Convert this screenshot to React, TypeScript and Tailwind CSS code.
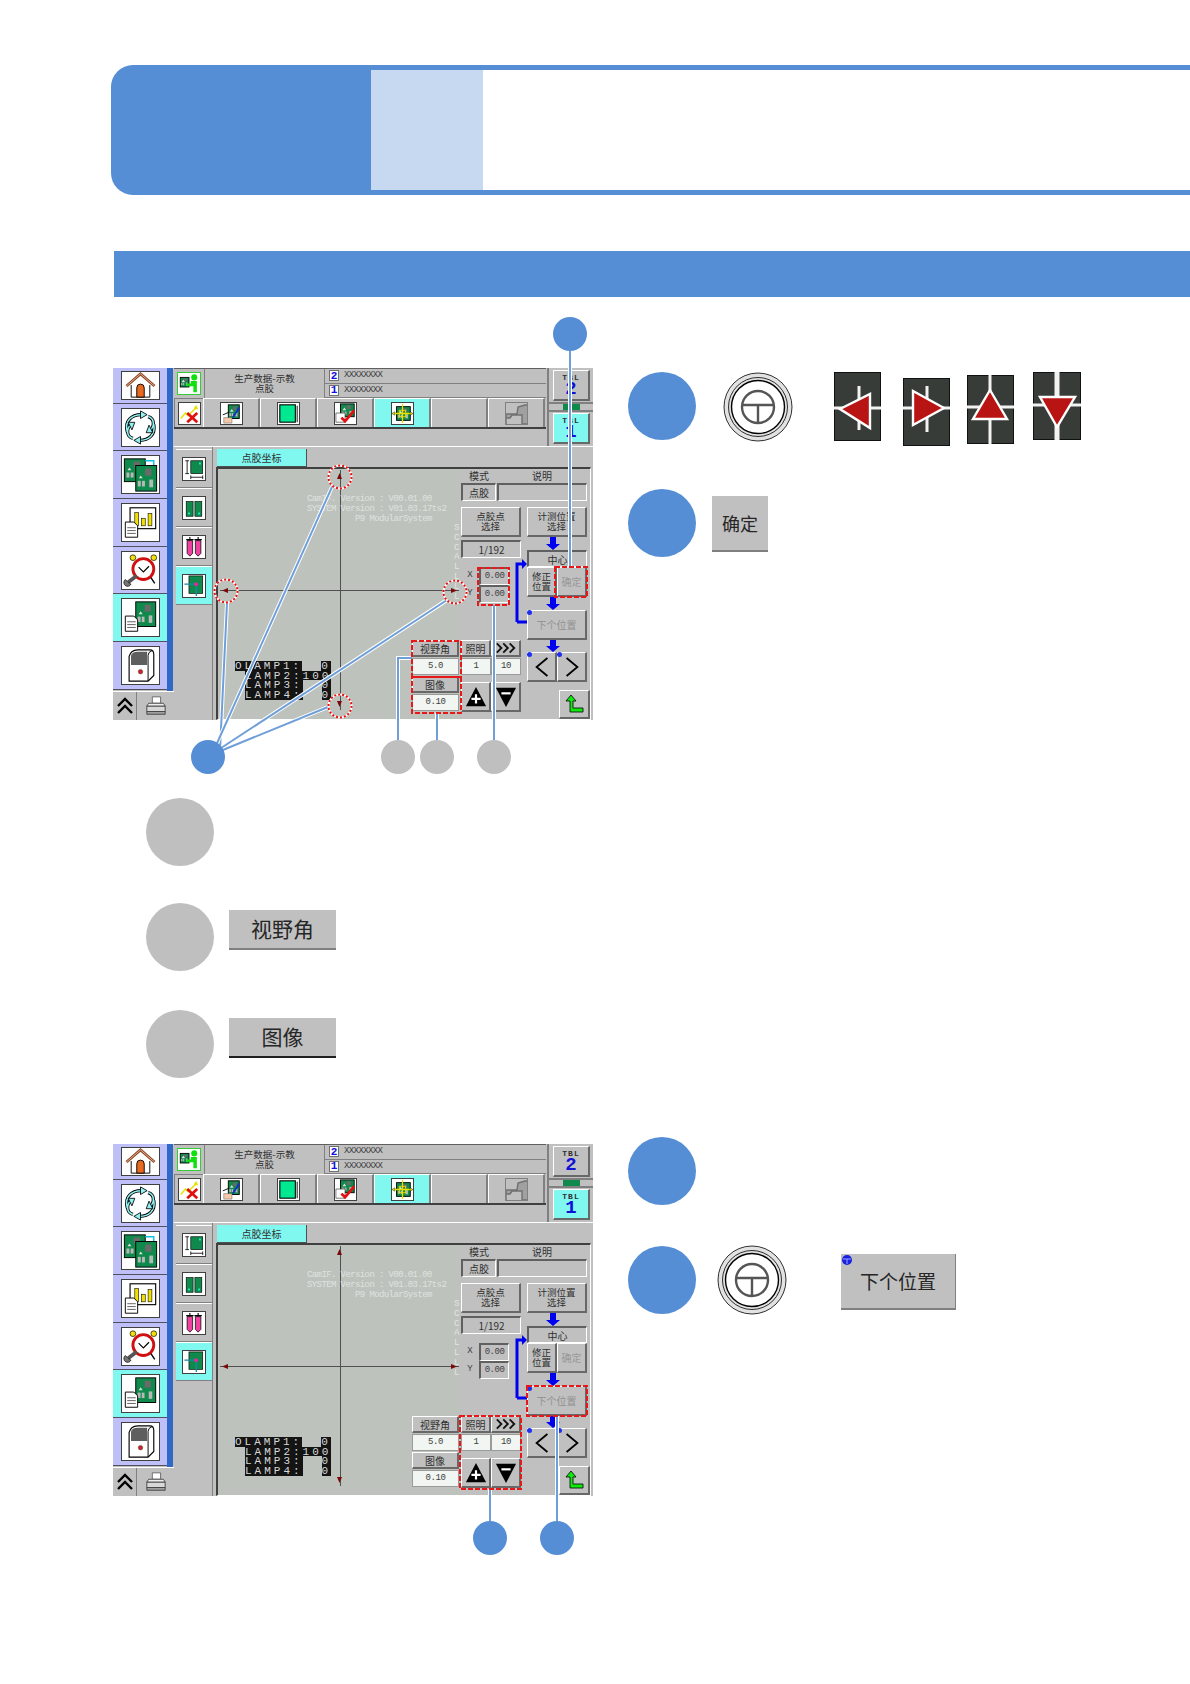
import React from "react";

const Pcb = ({ x = 0, y = 0, w = 24, h = 24 }: { x?: number; y?: number; w?: number; h?: number }) => (
  <g>
    <rect x={x} y={y} width={w} height={h} fill="#108a4c" stroke="#000" strokeWidth="1" />
    <rect x={x + w * 0.45} y={y + h * 0.12} width={w * 0.3} height={h * 0.28} fill="#6a6a6a" />
    <rect x={x + w * 0.1} y={y + h * 0.6} width={w * 0.14} height={h * 0.22} fill="#b8b8b8" />
    <rect x={x + w * 0.3} y={y + h * 0.6} width={w * 0.14} height={h * 0.22} fill="#b8b8b8" />
    <rect x={x + w * 0.65} y={y + h * 0.55} width={w * 0.18} height={h * 0.3} fill="#b8b8b8" />
    <path d={`M${x + w * 0.15} ${y + h * 0.5}l2 -3l2 3z`} fill="#ddd" />
  </g>
);

const Paper = ({ x, y }: { x: number; y: number }) => (
  <g>
    <path d={`M${x} ${y}h9l4 4v12h-13z`} fill="#fff" stroke="#000" strokeWidth="1" />
    <path d={`M${x + 2} ${y + 6}h9M${x + 2} ${y + 9}h9M${x + 2} ${y + 12}h9`} stroke="#333" strokeWidth="0.8" />
  </g>
);

const cyclePaths = "M5 24C2 13 9 6 20 6M27 8C34 10 34 18 29 23M33 16C35 27 28 33 18 33M11 31C4 29 4 21 9 16";
const sideIcons: React.ReactNode[] = [
  <svg key="a" viewBox="0 0 38 29" className="w-full h-full">
    <path d="M4 15L19 2L34 15" fill="none" stroke="#8a4a2a" strokeWidth="3" />
    <path d="M4 15L19 2L34 15" fill="none" stroke="#f0b090" strokeWidth="1" />
    <path d="M9 14V27H29V14" fill="#fff" stroke="#000" strokeWidth="1" />
    <path d="M15 27V17a4 4 0 0 1 8 0V27z" fill="#e86a20" stroke="#000" strokeWidth="1" />
  </svg>,
  <svg key="b" viewBox="0 0 38 39" className="w-full h-full">
    <g fill="none" stroke="#000" strokeWidth="3.4"><path d={cyclePaths} /></g>
    <g fill="none" stroke="#90f0f0" strokeWidth="1.6"><path d={cyclePaths} /></g>
    <path d="M19 2L26 6L19 10zM25 25L28 17L32 25zM19 37L12 33L19 29zM6 14L10 22L13 14z" fill="#90f0f0" stroke="#000" strokeWidth="0.9" />
  </svg>,
  <svg key="c" viewBox="0 0 38 39" className="w-full h-full">
    <Pcb x={2} y={3} w={22} h={24} />
    <path d="M24 5h9v5" fill="none" stroke="#10c0e0" strokeWidth="1.5" />
    <Pcb x={14} y={10} w={22} h={27} />
  </svg>,
  <svg key="d" viewBox="0 0 38 39" className="w-full h-full">
    <rect x="8" y="4" width="27" height="22" fill="#fff" stroke="#000" strokeWidth="1.2" />
    <rect x="13" y="9" width="4" height="14" fill="#f0e000" stroke="#000" strokeWidth="0.6" />
    <rect x="20" y="15" width="4" height="8" fill="#f0e000" stroke="#000" strokeWidth="0.6" />
    <rect x="27" y="10" width="4" height="13" fill="#f0e000" stroke="#000" strokeWidth="0.6" />
    <Paper x={3} y={19} />
  </svg>,
  <svg key="e" viewBox="0 0 38 39" className="w-full h-full">
    <circle cx="22" cy="18" r="11" fill="#fff" stroke="#d01010" strokeWidth="3" />
    <circle cx="11" cy="6" r="3" fill="#f0e010" stroke="#000" strokeWidth="0.7" />
    <circle cx="33" cy="6" r="3" fill="#f0e010" stroke="#000" strokeWidth="0.7" />
    <path d="M17 16l5 5l6 -6" fill="none" stroke="#000" strokeWidth="1.2" />
    <path d="M30 27l4 6" stroke="#000" strokeWidth="1.5" />
    <path d="M15 25L6 32" stroke="#555" strokeWidth="4" />
    <path d="M3 29a4 4 0 1 0 6 5l-3 -2z" fill="#777" stroke="#000" strokeWidth="0.7" />
  </svg>,
  <svg key="f" viewBox="0 0 38 39" className="w-full h-full">
    <Pcb x={14} y={3} w={21} h={26} />
    <Paper x={3} y={18} />
  </svg>,
  <svg key="g" viewBox="0 0 38 39" className="w-full h-full">
    <path d="M7 10Q9 3 16 3H29Q33 3 33 8V30L27 36H7z" fill="#fff" stroke="#000" strokeWidth="1.2" />
    <path d="M27 36V9Q27 5 31 4" fill="none" stroke="#000" strokeWidth="1" />
    <path d="M9 9Q10 5 16 5H26V19H9z" fill="#5e5e5e" />
    <circle cx="19" cy="26" r="2.4" fill="#d02020" stroke="#555" strokeWidth="0.6" />
  </svg>,
];

const tabIcons: React.ReactNode[] = [
  <svg key="1" viewBox="0 0 23 23" className="w-full h-full">
    <Pcb x={8} y={2} w={12} h={15} />
    <path d="M2 13l7 -3" stroke="#000" />
    <path d="M13 16L20 5" stroke="#1030d0" strokeWidth="2" />
    <path d="M3 16h9v6H3z" fill="#f4c8a8" stroke="#555" strokeWidth="0.5" />
  </svg>,
  <svg key="2" viewBox="0 0 23 23" className="w-full h-full">
    <rect x="2" y="2" width="17" height="19" fill="#00e890" stroke="#000" strokeWidth="1.2" />
    <path d="M21 3V21" stroke="#000" strokeWidth="1" />
  </svg>,
  <svg key="3" viewBox="0 0 23 23" className="w-full h-full">
    <Pcb x={6} y={1} w={15} h={14} />
    <path d="M1 11h10v10H1z" fill="#fff" stroke="#333" strokeWidth="0.7" />
    <path d="M7 16l4 4L21 8" fill="none" stroke="#e01010" strokeWidth="3" />
  </svg>,
  <svg key="4" viewBox="0 0 23 23" className="w-full h-full">
    <Pcb x={5} y={4} w={15} h={15} />
    <path d="M1 11.5h21M11.5 1v21" stroke="#e8e000" strokeWidth="1.4" />
    <rect x="8" y="8" width="7" height="7" fill="none" stroke="#e8e000" strokeWidth="1" />
    <path d="M3 9.5L0 11.5L3 13.5zM20 9.5L23 11.5L20 13.5z" fill="#e8e000" stroke="#000" strokeWidth="0.4" />
  </svg>,
  null,
  <svg key="6" viewBox="0 0 23 23" className="w-full h-full">
    <path d="M1 22V12L12 12L13 5L20 3H23V22H17V13H7L5 16H1" fill="#a0a0a0" stroke="#707070" strokeWidth="1.4" />
    <rect x="0.5" y="0.5" width="22" height="22" fill="none" stroke="#808080" />
  </svg>,
];

const leftTabIcons: React.ReactNode[] = [
  <svg key="1" viewBox="0 0 23 24" className="w-full h-full">
    <rect x="8" y="3" width="13" height="14" fill="#108a4c" stroke="#000" strokeWidth="0.7" />
    <path d="M4 3V17M2 3h4M2 17h4M8 21H21M8 19v4M21 19v4" stroke="#000" strokeWidth="0.9" />
    <rect x="17" y="5" width="2" height="2" fill="#20f0d0" />
  </svg>,
  <svg key="2" viewBox="0 0 23 24" className="w-full h-full">
    <rect x="3" y="5" width="7.5" height="16" fill="#108a4c" stroke="#000" strokeWidth="0.7" />
    <rect x="12.5" y="5" width="7.5" height="16" fill="#108a4c" stroke="#000" strokeWidth="0.7" />
    <rect x="5" y="17" width="2" height="2" fill="#20f0d0" />
    <rect x="16" y="17" width="2" height="2" fill="#20f0d0" />
  </svg>,
  <svg key="3" viewBox="0 0 23 24" className="w-full h-full">
    <path d="M4 5h6v14l-3 3l-3 -3zM13 5h6v14l-3 3l-3 -3z" fill="#f040a0" stroke="#000" strokeWidth="0.8" />
    <path d="M3 4h8M12 4h8M7 1v4M16 1v4" stroke="#000" strokeWidth="1.2" />
  </svg>,
  <svg key="4" viewBox="0 0 23 24" className="w-full h-full">
    <rect x="6" y="1" width="15" height="19" fill="#108a4c" stroke="#000" strokeWidth="0.7" />
    <path d="M1 10h12M14 11v12" stroke="#1090a0" strokeWidth="1.4" />
    <circle cx="14" cy="10" r="2" fill="#f020a0" />
  </svg>,
];

const Bevel = ({ className = "", cyan = false, children }: { className?: string; cyan?: boolean; children?: React.ReactNode }) => (
  <div className={`relative flex shrink-0 items-center justify-center ${cyan ? "bg-[#80f8f0]" : "bg-[#c0c0c0]"} border-t border-l border-r-2 border-b-2 border-t-white border-l-white border-r-[#686868] border-b-[#686868] text-center ${className}`}>
    {children}
  </div>
);

const Sunk = ({ className = "", children }: { className?: string; children?: React.ReactNode }) => (
  <div className={`flex shrink-0 items-center justify-center bg-[#c0c0c0] border-t-2 border-l-2 border-r border-b border-t-[#606060] border-l-[#606060] border-r-white border-b-white ${className}`}>
    {children}
  </div>
);

const Val = ({ children, className = "" }: { children: React.ReactNode; className?: string }) => (
  <div className={`flex shrink-0 h-[17px] items-center justify-center bg-[#f2f6f2] border border-[#9a9a9a] [font-family:'Liberation_Mono',monospace] text-[9px] tracking-[-0.4px] text-[#404040] ${className}`}>
    {children}
  </div>
);

const Two = ({ a, b }: { a: string; b: string }) => (
  <div className="leading-[9.5px] text-[9.5px] text-[#303030]">
    <div>{a}</div>
    <div>{b}</div>
  </div>
);

const Dot = () => <span className="absolute -left-[1px] -top-[1px] w-[5px] h-[5px] rounded-full bg-[#2030f0]" />;

const LampRow = ({ label, val, wide, ml }: { label: string; val: string; wide?: boolean; ml: number }) => (
  <div className="flex h-[9.67px] items-center [font-family:'Liberation_Mono',monospace] text-[11px] leading-[10px] text-[#d8d8d8] whitespace-pre">
    <span className="shrink-0" style={{ width: ml }} />
    <span className="bg-[#141414] h-full tracking-[3px]">{label}</span>
    {!wide && <span className="w-[19px] shrink-0" />}
    <span className="bg-[#141414] h-full tracking-[3px]">{val}</span>
  </div>
);

const TblKey = ({ n, cyan }: { n: string; cyan?: boolean }) => (
  <Bevel cyan={cyan} className="w-[37px] h-[31px] flex-col">
    <span className="[font-family:'Liberation_Mono',monospace] font-bold text-[8px] leading-[8px] tracking-[1px]">TBL</span>
    <span className="[font-family:'Liberation_Mono',monospace] font-bold text-[19px] leading-[15px] text-[#1010d8]">{n}</span>
  </Bevel>
);

const Screen = () => (
  <div className="flex w-[480px] h-[352px] bg-[#c0c0c0] shrink-0 [font-family:'Noto_Sans_CJK_SC',sans-serif] text-[#303030] overflow-hidden">
    {/* rail */}
    <div className="flex flex-col w-[61px] shrink-0">
      <div className="flex h-[323px]">
        <div className="flex flex-col w-[54px] border-r-0">
          {[36, 47, 48, 48, 47, 48, 48].map((h, i) => (
            <div key={i} style={{ height: h }} className={`flex items-center justify-center border-b border-[#505060] ${i === 5 ? "bg-[#80f8f0]" : "bg-[#c0c0f8]"}`}>
              <div className={`w-[39px] bg-white border border-[#404040] ${i === 0 ? "h-[29px]" : "h-[39px]"}`}>{sideIcons[i]}</div>
            </div>
          ))}
        </div>
        <div className="w-[6px] bg-[#3068c8]" />
      </div>
      <div className="flex h-[29px] border-t border-white">
        <div className="flex w-[24px] items-center justify-center border-r border-[#808080]">
          <svg viewBox="0 0 18 20" className="w-[18px] h-[20px]"><path d="M2 10L9 3L16 10M2 17L9 10L16 17" fill="none" stroke="#000" strokeWidth="2.4" /></svg>
        </div>
        <div className="flex flex-1 items-center justify-center">
          <svg viewBox="0 0 24 24" className="w-[22px] h-[22px]">
            <path d="M8 2h9v7H8z" fill="#fff" stroke="#666" /><path d="M2 12h20v6H2z" fill="#d8d8d8" stroke="#444" /><path d="M2 18h20v3H2z" fill="#a0a0a0" stroke="#444" /><path d="M4 9h16l2 3H2z" fill="#eee" stroke="#444" />
          </svg>
        </div>
      </div>
    </div>
    {/* main */}
    <div className="flex flex-col flex-1 min-w-0">
      <div className="flex h-[79px] shrink-0 border-b border-white">
        <div className="flex flex-col w-[372px] shrink-0">
          <div className="flex h-[30px] border-t border-[#606060]">
            <div className="flex w-[31px] items-center justify-center border-r border-[#808080]">
              <svg viewBox="0 0 24 24" className="w-[24px] h-[23px] bg-white border border-[#30d030]">
                <Pcb x={2} y={5} w={10} h={11} />
                <circle cx="18" cy="5" r="3.5" fill="#10e010" />
                <path d="M14 9h7v13h-4V15h-8v-3h5z" fill="#10e010" />
              </svg>
            </div>
            <div className="flex w-[119px] items-center justify-center text-center">
              <Two a="生产数据-示教" b="点胶" />
            </div>
            <div className="flex flex-col flex-1 border-l border-[#808080]">
              {["2", "1"].map((n) => (
                <div key={n} className="flex flex-1 items-center gap-[5px] pl-[4px] border-b border-[#808080]">
                  <span className="flex items-center justify-center w-[10px] h-[11px] bg-white border border-[#707070] [font-family:'Liberation_Mono',monospace] text-[11px] font-bold text-[#1010e0]">{n}</span>
                  <span className="[font-family:'Liberation_Mono',monospace] text-[9px] leading-[9px] tracking-[-0.6px] text-[#404040]">XXXXXXXX</span>
                </div>
              ))}
            </div>
          </div>
          <div className="flex h-[31px] border-b-2 border-[#404040]">
            <div className="flex w-[29px] shrink-0 items-center justify-center border-t border-l border-[#808080]">
              <svg viewBox="0 0 23 23" className="w-[23px] h-[23px] bg-white border border-[#404040]">
                <path d="M2 17l5 -6l3 3l9 -9" fill="none" stroke="#e8e000" strokeWidth="1.6" />
                <path d="M19 2l2 5l-5 -1z" fill="#e8e000" />
                <path d="M9 11l11 10M20 11L9 21" stroke="#e01010" strokeWidth="3" />
              </svg>
            </div>
            {tabIcons.map((ic, i) => (
              <div key={i} className={`flex w-[57px] shrink-0 items-center justify-center border-t border-l border-t-white border-l-white border-r-2 border-r-[#808080] ${i === 3 ? "bg-[#80f8f0]" : ""}`}>
                {ic && <div className={`w-[23px] h-[23px] ${i === 5 ? "" : "bg-white border border-[#404040]"}`}>{ic}</div>}
              </div>
            ))}
          </div>
          <div className="flex-1" />
        </div>
        <div className="flex flex-col items-center flex-1 pt-[2px] border-l-2 border-[#808080] ml-[1px]">
          <TblKey n="2" />
          <div className="flex items-center justify-center w-[45px] h-[10px] my-[1px] border-y-2 border-[#808080]">
            <span className="w-[17px] h-[6px] bg-[#108a4c]" />
          </div>
          <TblKey n="1" cyan />
        </div>
      </div>
      <div className="flex flex-1 min-h-0 pl-[2px]">
        <div className="flex flex-col w-[37px] shrink-0 pt-[2px] border-r border-[#808080]">
          {leftTabIcons.map((ic, i) => (
            <div key={i} className={`flex h-[39px] shrink-0 items-center justify-center border-b border-[#808080] border-t border-t-white ${i === 3 ? "bg-[#80f8f0]" : ""}`}>
              <div className="w-[24px] h-[24px] bg-white border border-[#404040]">{ic}</div>
            </div>
          ))}
        </div>
        <div className="flex flex-col ml-[3px] w-[375px] shrink-0">
          <div className="flex h-[20px] shrink-0 items-end">
            <div className="flex w-[90px] h-[18px] items-center justify-center bg-[#80f8f0] border-r border-b border-[#505050] text-[10px] ml-[1px]">点胶坐标</div>
          </div>
          <div className="flex flex-1 border-t-2 border-l-2 border-[#404040] border-r border-r-white border-b border-b-white min-h-0">
            <div className="relative w-[242px] shrink-0 bg-[#bdc2bd]">
              <svg className="absolute left-0 top-0" width="242" height="250" viewBox="0 0 242 250">
                <path d="M122.5 1V241M2 121.5H241" stroke="#505050" strokeWidth="1" />
                <path d="M119 10L121.5 4L124 10zM119 232L121.5 238L124 232zM10 119L4 121.5L10 124zM233 119L239 121.5L233 124z" fill="#7a0a0a" />
              </svg>
              <div className="absolute left-[89px] top-[26px] [font-family:'Liberation_Mono',monospace] text-[9px] leading-[9.8px] tracking-[-0.6px] text-[#dfe3df] whitespace-pre">
                {"CamIF. Version : V00.01.00\nSYSTEM Version : V01.03.17ts2\n          P9 ModularSystem"}
              </div>
              <div className="absolute left-[236px] top-[55px] [font-family:'Liberation_Mono',monospace] text-[9px] leading-[9.8px] text-[#e4e4e4]">
                {"SCCALLLL".split("").map((c, i) => <div key={i}>{c}</div>)}
              </div>
              <div className="absolute left-[17px] top-[192px]">
                <LampRow ml={0} label="OLAMP1:" val="0" />
                <LampRow ml={10} label="LAMP2:" val="100" wide />
                <LampRow ml={10} label="LAMP3:" val="0" />
                <LampRow ml={10} label="LAMP4:" val="0" />
              </div>
            </div>
            <div className="relative flex flex-col w-[131px] shrink-0 pl-[1px]">
              {/* lower-left value block, laps over the graph */}
              <div className="absolute right-full top-[171px] flex flex-col w-[47px] mr-[1px] text-[10px]">
                <Bevel className="h-[17px]">视野角</Bevel>
                <Val className="mt-[1px]">5.0</Val>
                <Bevel className="h-[17px] mt-[1px]">图像</Bevel>
                <Val className="mt-[1px]">0.10</Val>
              </div>
              <div className="flex text-[10px] h-[14px] items-center leading-none">
                <span className="w-[36px] text-center">模式</span>
                <span className="w-[90px] text-center">说明</span>
              </div>
              <div className="flex gap-[1px] h-[18px] text-[10px]">
                <Sunk className="w-[35px]">点胶</Sunk>
                <Sunk className="w-[90px]" />
              </div>
              <div className="flex gap-[6px] mt-[6px]">
                <div className="flex flex-col w-[60px] shrink-0">
                  <Bevel className="h-[30px]"><Two a="点胶点" b="选择" /></Bevel>
                  <Sunk className="h-[18px] mt-[3px] text-[10px]">1/192</Sunk>
                  {[["X", "0.00"], ["Y", "0.00"]].map(([l, v], i) => (
                    <div key={l} className={`flex h-[18px] items-center ${i === 0 ? "mt-[9px]" : ""}`}>
                      <span className="w-[18px] text-center [font-family:'Liberation_Mono',monospace] text-[9px] text-[#404040]">{l}</span>
                      <Sunk className="w-[30px] h-[18px] [font-family:'Liberation_Mono',monospace] text-[9px] tracking-[-0.5px] text-[#404040]">{v}</Sunk>
                    </div>
                  ))}
                  <div className="flex h-[17px] mt-[37px] text-[10px]">
                    <Bevel className="w-[30px]">照明</Bevel>
                    <Bevel className="w-[30px]">
                      <svg viewBox="0 0 24 12" className="w-[22px] h-[12px]"><path d="M2 1L7 6L2 11M9 1L14 6L9 11M16 1L21 6L16 11" fill="none" stroke="#111" strokeWidth="2" /></svg>
                    </Bevel>
                  </div>
                  <div className="flex mt-[1px]">
                    <Val className="w-[30px]">1</Val>
                    <Val className="w-[30px]">10</Val>
                  </div>
                  <div className="flex h-[30px] mt-[7px]">
                    <Bevel className="w-[30px]">
                      <svg viewBox="0 0 24 24" className="w-[22px] h-[22px]"><path d="M12 1L23 22H1z" fill="#000" /><path d="M12 9V19M7 14H17" stroke="#fff" strokeWidth="2.4" /></svg>
                    </Bevel>
                    <Bevel className="w-[30px]">
                      <svg viewBox="0 0 24 24" className="w-[22px] h-[22px]"><path d="M1 2H23L12 23z" fill="#000" /><path d="M7 8H17" stroke="#fff" strokeWidth="2.4" /></svg>
                    </Bevel>
                  </div>
                </div>
                <div className="flex flex-col w-[60px] shrink-0">
                  <Bevel className="h-[30px]"><Two a="计测位置" b="选择" /></Bevel>
                  <Sunk className="h-[17px] mt-[13px] text-[10px]">中心</Sunk>
                  <div className="flex h-[30px]">
                    <Bevel className="w-[30px]"><Two a="修正" b="位置" /></Bevel>
                    <Bevel className="w-[30px] text-[10px] text-[#989898]">确定</Bevel>
                  </div>
                  <Bevel className="h-[30px] mt-[13px] text-[10px] text-[#909090]"><Dot />下个位置</Bevel>
                  <div className="flex h-[30px] mt-[12px]">
                    <Bevel className="w-[30px]">
                      <Dot />
                      <svg viewBox="0 0 20 24" className="w-[18px] h-[24px]"><path d="M16 2L4 12L16 22" fill="none" stroke="#000" strokeWidth="2" /></svg>
                    </Bevel>
                    <Bevel className="w-[30px]">
                      <Dot />
                      <svg viewBox="0 0 20 24" className="w-[18px] h-[24px]"><path d="M4 2L16 12L4 22" fill="none" stroke="#000" strokeWidth="2" /></svg>
                    </Bevel>
                  </div>
                  <Bevel className="w-[31px] h-[29px] mt-[8px] ml-[32px]">
                    <svg viewBox="0 0 22 22" className="w-[22px] h-[22px]"><path d="M8 2L13 8H10V15H20V19H7V8H3z" fill="#10e810" stroke="#000" strokeWidth="0.8" /></svg>
                  </Bevel>
                </div>
              </div>
              <svg className="absolute left-0 top-0" width="131" height="250" viewBox="0 0 131 250">
                <path d="M90 68h6v7h4l-7 6l-7 -6h4zM90 128h6v7h4l-7 6l-7 -6h4zM90 171h6v6h4l-7 6l-7 -6h4z" fill="#0000f0" />
                <path d="M57 153V95H63" fill="none" stroke="#0000f0" strokeWidth="3" />
                <path d="M62 90L67 95L62 100z" fill="#0000f0" />
                <path d="M57 153H67" fill="none" stroke="#0000f0" strokeWidth="3" />
              </svg>
            </div>
          </div>
        </div>
      </div>
    </div>
  </div>
);

const Num = ({ color }: { color: string }) => (
  <div className={`w-[68px] h-[68px] shrink-0 rounded-full ${color}`} />
);

const Knob = () => (
  <svg viewBox="0 0 70 70" className="w-[70px] h-[70px] shrink-0">
    <circle cx="35" cy="35" r="34" fill="#e2e2e2" stroke="#000" strokeWidth="0.8" />
    <circle cx="35" cy="35" r="29.5" fill="none" stroke="#000" strokeWidth="0.8" />
    <circle cx="35" cy="35" r="26.5" fill="#fff" stroke="#000" strokeWidth="1.4" />
    <circle cx="35" cy="35" r="16" fill="none" stroke="#555" strokeWidth="2.4" />
    <path d="M19 33H51M35 33V51" stroke="#555" strokeWidth="2.4" />
  </svg>
);

const KeyImg = ({ w, h, tri, hy, vx, vy = [0, h], vw = 3 }: { w: number; h: number; tri: string; hy: number; vx: number; vy?: number[]; vw?: number }) => (
  <svg width={w} height={h} viewBox={`0 0 ${w} ${h}`} className="shrink-0">
    <rect x="0.5" y="0.5" width={w - 1} height={h - 1} fill="#383c39" stroke="#111" />
    <path d={`M${vx} ${vy[0]}V${vy[1]}`} stroke="#f2f2f2" strokeWidth={vw} />
    <path d={`M0 ${hy}H${w}`} stroke="#f2f2f2" strokeWidth="3" />
    <path d={tri} fill="#b81414" stroke="#fff" strokeWidth="2.4" strokeLinejoin="miter" />
  </svg>
);

const Overlay = () => {
  const blue = "#6f9fd8";
  const L = ({ d }: { d: string }) => (
    <>
      <path d={d} fill="none" stroke="#fff" strokeWidth="4" />
      <path d={d} fill="none" stroke={blue} strokeWidth="2" />
    </>
  );
  const Ring = ({ cx, cy }: { cx: number; cy: number }) => (
    <>
      <circle cx={cx} cy={cy} r="11.5" fill="none" stroke="#fff" strokeWidth="2" />
      <circle cx={cx} cy={cy} r="11.5" fill="none" stroke="#e81010" strokeWidth="2" strokeDasharray="2 2" />
    </>
  );
  const Dash = ({ x, y, w, h }: { x: number; y: number; w: number; h: number }) => (
    <rect x={x} y={y} width={w} height={h} fill="none" stroke="#e81818" strokeWidth="2" strokeDasharray="5 2" />
  );
  return (
    <svg className="absolute left-0 top-0 pointer-events-none" width="1190" height="1684" viewBox="0 0 1190 1684">
      <L d="M570 340V567" />
      <L d="M494 605V745" />
      <L d="M437 713V745" />
      <L d="M412 658H398V745" />
      <L d="M227 603L220 750" />
      <L d="M332 487L214 750" />
      <L d="M447 600L215 752" />
      <L d="M328 707L218 752" />
      <Ring cx={340} cy={477} />
      <Ring cx={226} cy={591} />
      <Ring cx={340} cy={706} />
      <Ring cx={455} cy={592} />
      <Dash x={555} y={567} w={32} h={30} />
      <Dash x={478} y={568} w={31} h={37} />
      <Dash x={412} y={641} w={49} h={36} />
      <Dash x={412} y={677} w={49} h={36} />
      <circle cx="570" cy="334" r="17" fill="#558ed5" />
      <circle cx="208" cy="757" r="17" fill="#558ed5" />
      <circle cx="398" cy="757" r="17" fill="#bfbfbf" />
      <circle cx="437" cy="757" r="17" fill="#bfbfbf" />
      <circle cx="494" cy="757" r="17" fill="#bfbfbf" />

      <L d="M490 1489V1525" />
      <L d="M557 1416V1525" />
      <Dash x={527} y={1386} w={60} h={30} />
      <Dash x={460} y={1416} w={61} h={73} />
      <circle cx="490" cy="1538" r="17" fill="#558ed5" />
      <circle cx="557" cy="1538" r="17" fill="#558ed5" />
    </svg>
  );
};

const DocBtn = ({ className = "", children }: { className?: string; children: React.ReactNode }) => (
  <div className={`relative flex shrink-0 items-center justify-center bg-[#c0c0c0] border-b-2 text-[#262626] ${className}`}>{children}</div>
);

export default function App() {
  return (
    <div className="relative w-[1190px] h-[1684px] bg-white overflow-hidden [font-family:'Noto_Sans_CJK_SC',sans-serif]">
      <div className="pt-[65px] pl-[111px]">
        <div className="flex h-[130px] rounded-l-[22px] bg-[#558ed5] overflow-hidden">
          <div className="w-[260px] shrink-0" />
          <div className="w-[112px] shrink-0 my-[5px] bg-[#c6d9f1]" />
          <div className="flex-1 my-[5px] bg-white" />
        </div>
      </div>
      <div className="ml-[114px] mt-[56px] h-[46px] bg-[#558ed5]" />

      <div className="flex pl-[113px] mt-[71px]">
        <Screen />
        <div className="flex flex-col ml-[35px] pt-[4px]">
          <div className="flex items-start">
            <Num color="bg-[#558ed5]" />
            <div className="ml-[27px]"><Knob /></div>
            <div className="flex items-start ml-[41px]">
              <KeyImg w={47} h={69} hy={36} vx={25} vy={[14, 58]} tri="M6 37L36 22V56z" />
              <div className="ml-[22px] mt-[6px]"><KeyImg w={47} h={68} hy={30} vx={24} vy={[8, 54]} tri="M41 30L10 13V47z" /></div>
              <div className="ml-[17px] mt-[3px]"><KeyImg w={47} h={69} hy={32} vx={23} tri="M23 15L6 44H40z" /></div>
              <div className="ml-[19px]"><KeyImg w={48} h={68} hy={33} vx={24} vw={5} tri="M24 55L7 25H42z" /></div>
            </div>
          </div>
          <div className="flex items-start mt-[43px]">
            <Num color="bg-[#558ed5]" />
            <DocBtn className="w-[56px] h-[56px] ml-[16px] mt-[7px] text-[18px] border-b-[#808080]">确定</DocBtn>
          </div>
        </div>
      </div>

      <div className="flex flex-col pl-[146px] mt-[78px]">
        <Num color="bg-[#bfbfbf]" />
        <div className="flex items-start mt-[37px]">
          <Num color="bg-[#bfbfbf]" />
          <DocBtn className="w-[107px] h-[40px] ml-[15px] mt-[7px] text-[21px] border-b-[#808080]">视野角</DocBtn>
        </div>
        <div className="flex items-start mt-[39px]">
          <Num color="bg-[#bfbfbf]" />
          <DocBtn className="w-[107px] h-[40px] ml-[15px] mt-[8px] text-[21px] border-b-[#202020]">图像</DocBtn>
        </div>
      </div>

      <div className="flex pl-[113px] mt-[66px]">
        <Screen />
        <div className="flex flex-col ml-[35px]">
          <div className="-mt-[7px]"><Num color="bg-[#558ed5]" /></div>
          <div className="flex items-start mt-[41px]">
            <Num color="bg-[#558ed5]" />
            <div className="ml-[21px] -mt-[1px]"><Knob /></div>
            <DocBtn className="w-[115px] h-[56px] ml-[54px] mt-[8px] text-[19px] border-r border-r-[#808080] border-b-[#808080]">
              <svg viewBox="0 0 10 10" className="absolute left-[1px] top-[1px] w-[10px] h-[10px]"><circle cx="5" cy="5" r="5" fill="#1a20e0" /><path d="M1 4H9M5 4V9" stroke="#a0a8ff" strokeWidth="1" /></svg>
              下个位置
            </DocBtn>
          </div>
        </div>
      </div>
      <Overlay />
    </div>
  );
}
